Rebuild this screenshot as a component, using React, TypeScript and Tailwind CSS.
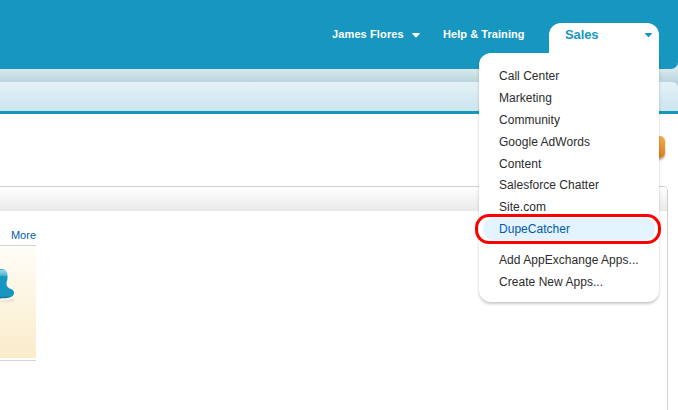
const apps = [
  { name: "Call Center", style: "h-[22px]" },
  { name: "Marketing", style: "h-[22px]" },
  { name: "Community", style: "h-[22px]" },
  { name: "Google AdWords", style: "h-[22px]" },
  { name: "Content", style: "h-[21px]" },
  { name: "Salesforce Chatter", style: "h-[22px]" },
  { name: "Site.com", style: "h-[22px]" },
];

function Header() {
  return (
    <header className="bg-[linear-gradient(#d9e8ed_69px,#b9d5de_82px)]">
      <div className="flex h-[69px] items-start rounded-br-[7px] bg-[#1797c0] pl-[332px] pt-[27px] text-[11px] leading-[14px] font-bold text-white">
        <button className="flex w-[111px] items-center text-left">
          <span className="w-[80px] tracking-[0.12px] whitespace-nowrap">James Flores</span>
          <svg className="mt-[2px]" width="8" height="5" viewBox="0 0 8 5" fill="currentColor">
            <path d="M.5 0h7L8 .5 4.3 4.5h-.6L0 .5z" />
          </svg>
        </button>
        <a className="tracking-[0.06px] whitespace-nowrap">Help &amp; Training</a>
      </div>
      <div className="h-[13px]" />
      <div className="h-[32px] rounded-tr-[6px] border-b-[3px] border-[#1797c0] bg-[linear-gradient(#e5f2f7,#cbe5ee)]" />
    </header>
  );
}

function PersonIcon() {
  return (
    <svg width="16" height="42" viewBox="0 0 16 42">
      <defs>
        <linearGradient id="person" x1="0" y1="0" x2="0" y2="1">
          <stop offset="0" stopColor="#1797c0" />
          <stop offset=".05" stopColor="#94d5e9" />
          <stop offset=".22" stopColor="#52b5d4" />
          <stop offset=".26" stopColor="#1797c0" />
          <stop offset=".9" stopColor="#1797c0" />
          <stop offset="1" stopColor="#0c7599" />
        </linearGradient>
        <linearGradient id="shade" x1="0" y1="0" x2="0" y2="1">
          <stop offset="0" stopColor="#c8c2b5" stopOpacity=".5" />
          <stop offset="1" stopColor="#c8c2b5" stopOpacity="0" />
        </linearGradient>
      </defs>
      <path d="M0 34.500c5 0 10-.8 14-2 .5 2 0 4-1 5.500-4-1-9-1.200-13-1z" fill="url(#shade)" />
      <path d="M0 3c2-.3 4 .1 5.500 1.300C7.300 5.600 7.700 8 7.500 12c-.1 3-1.300 4-1 6.500.4 2.500 2.300 3.600 5.500 5 1.700.8 2.200 2.500 2 4-.3 2-1.700 3.200-4.500 4-3 .7-6 .9-9.500.9z" fill="url(#person)" />
    </svg>
  );
}

function AppMenu() {
  return (
    <div className="absolute top-[23px] left-[479px] w-[180px] text-[12px] text-[#2b2b2b]">
      <button className="ml-auto flex h-[30px] w-[110px] items-start justify-between rounded-t-[12px] bg-white pt-[3px] pr-[7px] pl-[16px] text-[13px] leading-[17px] font-bold text-[#1797c0]">
        <span className="tracking-[-0.1px]">Sales</span>
        <svg className="mt-[7px]" width="7" height="4" viewBox="0 0 7 4" fill="currentColor">
          <path d="M0 0h7v.5L3.900 4h-.8L0 .5z" />
        </svg>
      </button>
      <div className="h-[249px] rounded-tl-[12px] rounded-b-[12px] bg-white pt-[12px] shadow-[0_2px_3px_rgba(0,0,0,0.22)]">
        {apps.map((app) => (
          <div key={app.name} className={`pl-[20px] leading-[22px] tracking-[0.03px] whitespace-nowrap ${app.style}`}>
            {app.name}
          </div>
        ))}
        <div className="-mt-[4px] -mr-[2px] -ml-[4px] h-[30px] rounded-[14px] border-[3px] border-[#ff0000] p-[1px]">
          <div className="mr-[2px] ml-[4px] h-[22px] rounded-[11px] bg-[#e3f3ff] pl-[16px] leading-[22px] tracking-[0.03px] text-[#015ba7]">
            DupeCatcher
          </div>
        </div>
        <div className="mt-[5px] h-[22px] pl-[20px] leading-[22px] tracking-[0.04px] whitespace-nowrap">Add AppExchange Apps...</div>
        <div className="h-[22px] pl-[20px] leading-[22px] tracking-[0.04px] whitespace-nowrap">Create New Apps...</div>
      </div>
    </div>
  );
}

export default function App() {
  return (
    <div className="relative h-[410px] w-[678px] overflow-hidden bg-white font-['Liberation_Sans',Arial,sans-serif]">
      <Header />
      <main>
        <div className="flex h-[72px] justify-end pt-[22px] pr-[13px]">
          <button className="h-[22px] w-[30px] rounded-[5px] bg-[linear-gradient(#f4ac50,#dc7e14)] shadow-[0_2px_2px_rgba(0,0,0,0.3)]" />
        </div>
        <section className="mr-[10px] h-[240px] rounded-tr-[5px] border-t border-r border-[#cfcfcf] bg-white">
          <div className="h-[24px] rounded-tr-[4px] bg-[linear-gradient(#fff,#e9e9e9)]" />
          <div className="w-[36px]">
            <div className="flex h-[35px] items-start justify-end border-b border-[#cfd4da] pt-[17px] text-[11px] leading-[14px] text-[#015ba7]">
              <span>More</span>
            </div>
            <div className="border-b border-[#cfd4da] pb-[2px]">
              <div className="h-[112px] bg-[linear-gradient(#fffdf8,#faecca)] pt-[20px]">
                <PersonIcon />
              </div>
            </div>
          </div>
        </section>
      </main>
      <AppMenu />
    </div>
  );
}
